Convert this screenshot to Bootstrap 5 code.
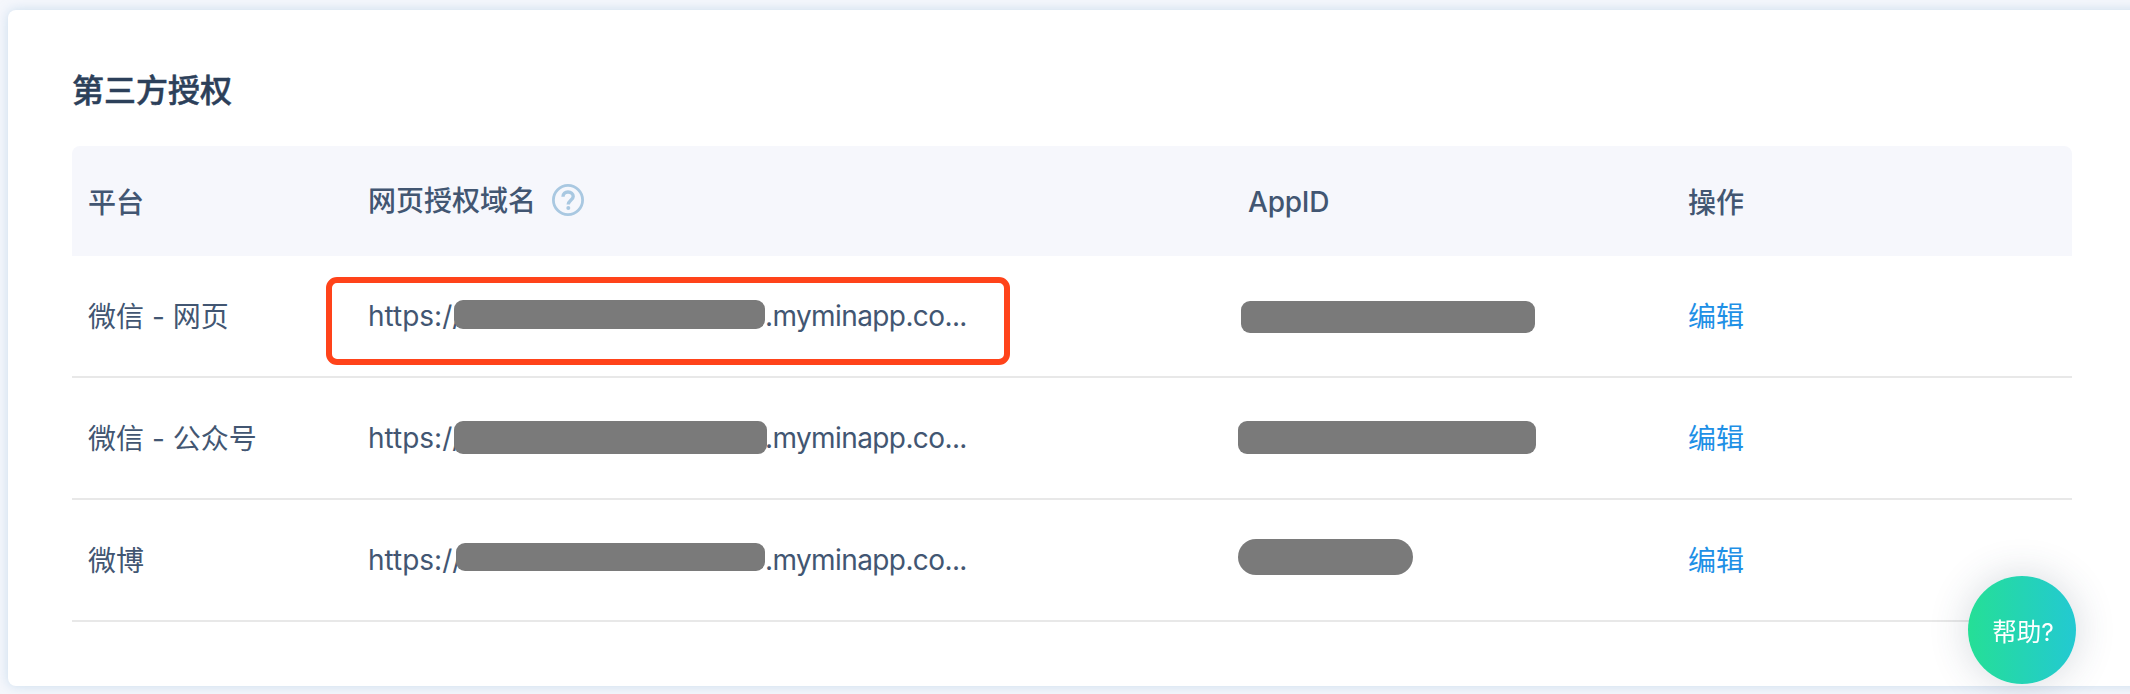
<!DOCTYPE html>
<html lang="zh-CN">
<head>
<meta charset="utf-8">
<title>第三方授权</title>
<link href="https://cdn.jsdelivr.net/npm/bootstrap@5.3.0/dist/css/bootstrap.min.css" rel="stylesheet">
<style>
  html, body { height: 100%; overflow: hidden; }
  body { background: #f5f7fc; color: #425672; font: 400 28px/40px Inter, "Noto Sans CJK SC", sans-serif; }
  .auth-panel { margin: 10px 0 0 8px; height: 676px; width: 2140px; padding: 57px 0 0 64px; background: #fff; border-radius: 8px; box-shadow: 0 0 12px rgba(160, 195, 225, .5); }
  .auth-title { font-size: 32px; line-height: 48px; font-weight: 500; -webkit-text-stroke: .5px; color: #2c405a; margin: 0 0 31px; }
  .auth-table { width: 2000px; table-layout: fixed; border-collapse: separate; border-spacing: 0; color: inherit; margin: 0; }
  .auth-table th, .auth-table td { padding: 0 16px; vertical-align: middle; color: inherit; }
  .auth-table th { height: 110px; background: #f6f7fc; font-weight: 500; border: 0; padding-top: 4px; }
  .auth-table th.domain { padding-top: 0; padding-bottom: 2px; }
  .auth-table th.domain .label { padding-top: 2px; }
  .auth-table th.app-id { padding-top: 2px; letter-spacing: -.2px; }
  .auth-table th:first-child { border-radius: 8px 0 0 0; }
  .auth-table th:last-child { border-radius: 0 8px 0 0; }
  .auth-table td { height: 122px; background: #fff; border-bottom: 2px solid #e8e8e8; padding-top: 2px; }
  .auth-table a { color: #1e90e6; }
  .url-head, .url-tail { margin-top: -1px; margin-bottom: 1px; }
  .url-head { width: 397px; }
  .url-tail { letter-spacing: -.6px; }
  .redacted { position: absolute; background: #7a7a7a; border-radius: 9px; }
  .url-1 { left: 86px; top: 3px; width: 311px; height: 29px; }
  .url-2 { left: 86px; top: 2px; width: 313px; height: 33px; }
  .url-3 { left: 88px; top: 2px; width: 309px; height: 28px; }
  .id-1 { left: -7px; top: 4px; width: 294px; height: 32px; }
  .id-2 { left: -10px; top: 2px; width: 298px; height: 33px; }
  .id-3 { left: -10px; top: -2px; width: 175px; height: 36px; border-radius: 18px; }
  .id-slot { height: 40px; }
  .focus-box { position: absolute; left: -42px; top: -20px; width: 684px; height: 88px; border: 6px solid #ff431a; border-radius: 11px; }
  .help-fab { position: fixed; left: 1968px; top: 576px; width: 108px; height: 108px; border-radius: 50%; background: linear-gradient(90deg, #25df96, #23c9d2); color: #fff; font-size: 24.5px; font-weight: 400; box-shadow: 0 0 40px rgba(44, 64, 90, .2); padding: 5px 0 0 2px; }
</style>
</head>
<body>
<main class="auth-panel">
  <h1 class="auth-title">第三方授权</h1>
  <table class="auth-table">
    <colgroup><col style="width:280px"><col style="width:880px"><col style="width:440px"><col style="width:400px"></colgroup>
    <thead>
      <tr>
        <th>平台</th>
        <th class="domain"><div class="d-flex align-items-center"><span class="label">网页授权域名</span>
          <svg class="ms-3" width="32" height="32" viewBox="0 0 32 32" fill="none" stroke="#a9c8e1"><circle cx="16" cy="16" r="14.6" stroke-width="2.8"/><path d="M11 12.7C11 9.5 13 8 16 8s5.2 1.7 5.2 4.4c0 3.6-5 4.1-5 8.2" stroke-width="3.4"/><circle cx="16.3" cy="24" r="2" fill="#a9c8e1" stroke="none"/></svg></div></th>
        <th class="app-id">AppID</th>
        <th>操作</th>
      </tr>
    </thead>
    <tbody>
      <tr>
        <td>微信 - 网页</td>
        <td><div class="d-flex position-relative"><span class="url-head">https://</span><span class="url-tail">.myminapp.co...</span><span class="redacted url-1"></span><span class="focus-box"></span></div></td>
        <td><div class="position-relative id-slot"><span class="redacted id-1"></span></div></td>
        <td><a class="text-decoration-none" href="#">编辑</a></td>
      </tr>
      <tr>
        <td>微信 - 公众号</td>
        <td><div class="d-flex position-relative"><span class="url-head">https://</span><span class="url-tail">.myminapp.co...</span><span class="redacted url-2"></span></div></td>
        <td><div class="position-relative id-slot"><span class="redacted id-2"></span></div></td>
        <td><a class="text-decoration-none" href="#">编辑</a></td>
      </tr>
      <tr>
        <td>微博</td>
        <td><div class="d-flex position-relative"><span class="url-head">https://</span><span class="url-tail">.myminapp.co...</span><span class="redacted url-3"></span></div></td>
        <td><div class="position-relative id-slot"><span class="redacted id-3"></span></div></td>
        <td><a class="text-decoration-none" href="#">编辑</a></td>
      </tr>
    </tbody>
  </table>
</main>
<button class="help-fab btn border-0 d-flex align-items-center justify-content-center">帮助?</button>
<script src="https://cdn.jsdelivr.net/npm/bootstrap@5.3.0/dist/js/bootstrap.bundle.min.js"></script>
</body>
</html>
